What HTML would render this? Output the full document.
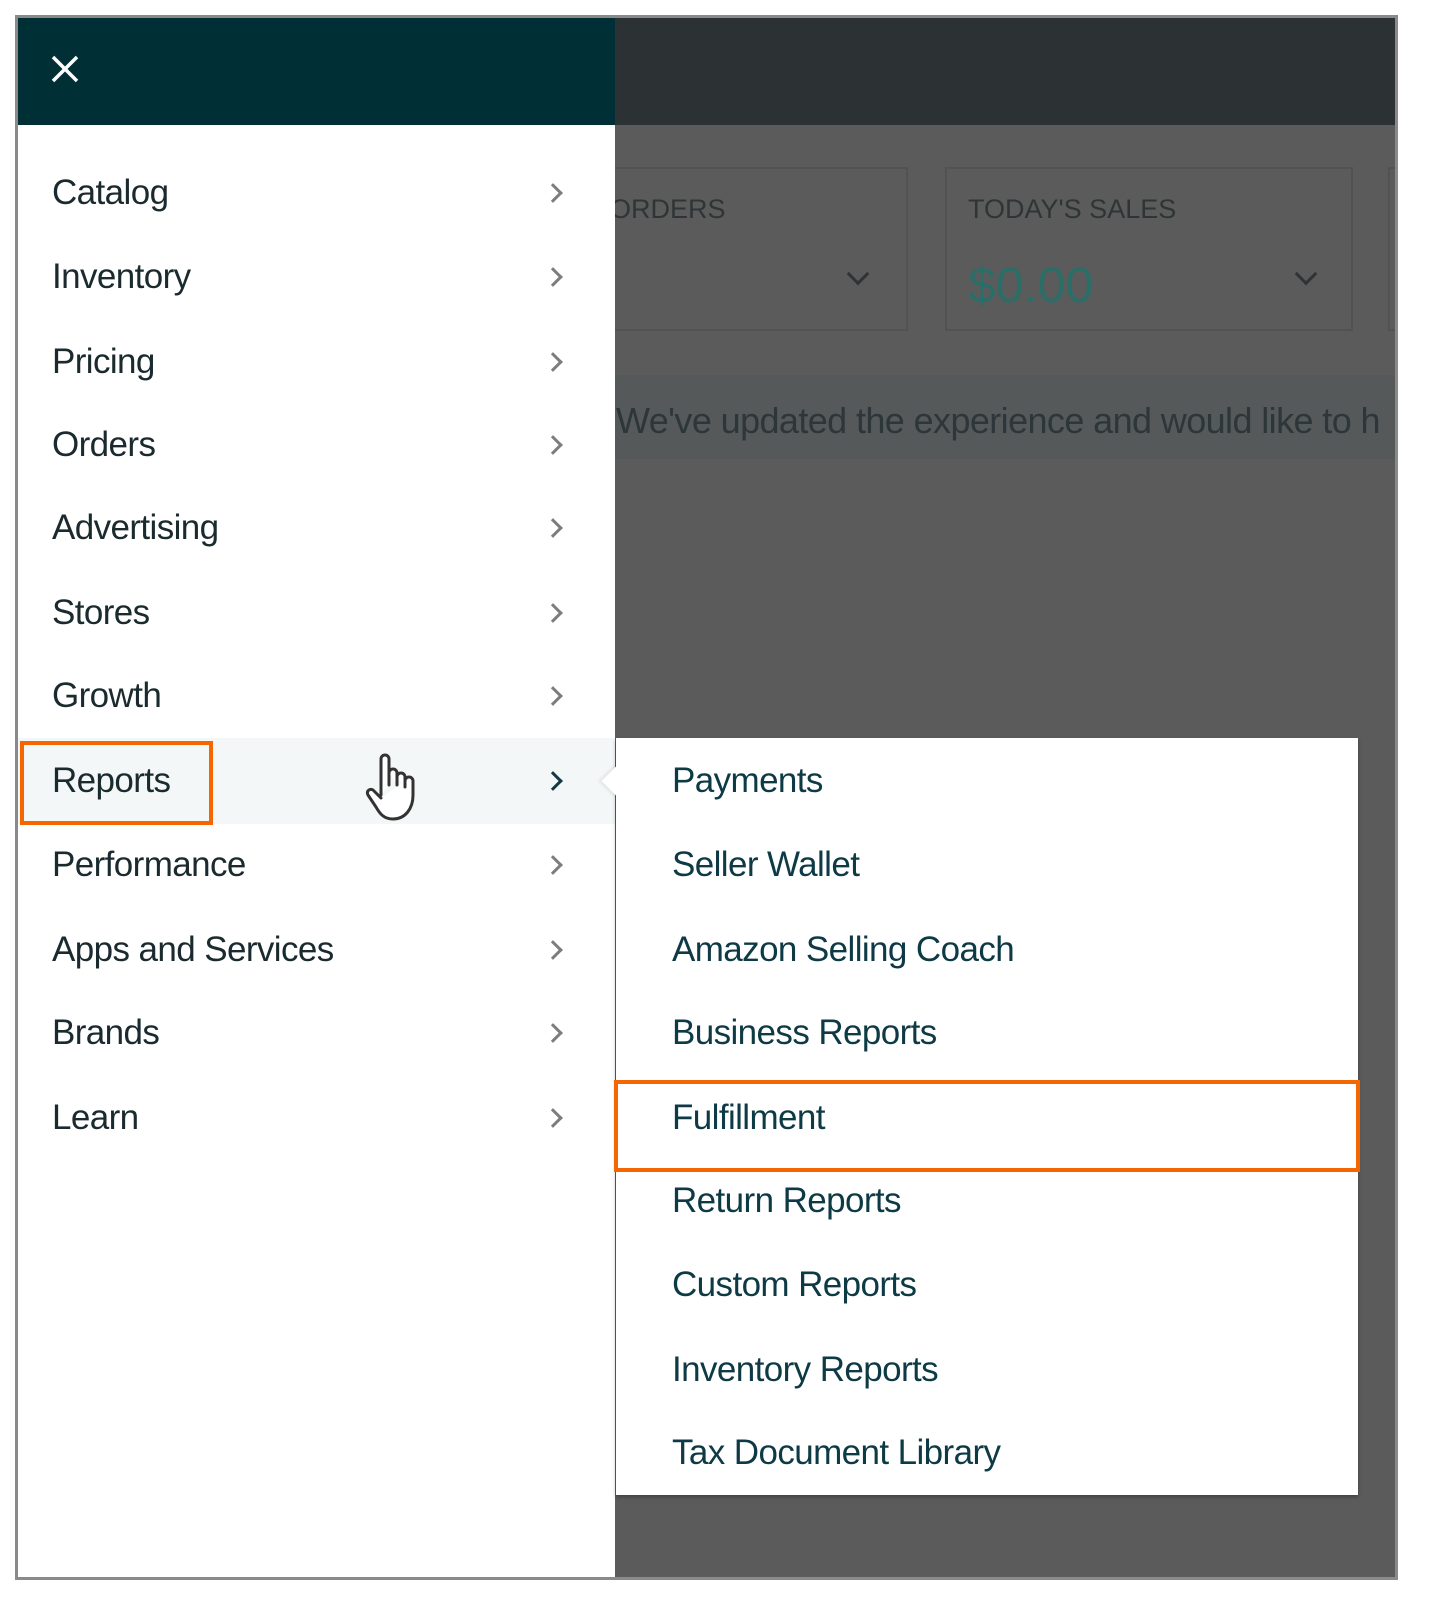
<!DOCTYPE html>
<html><head><meta charset="utf-8"><style>
*{margin:0;padding:0;box-sizing:border-box}
body{width:1440px;height:1599px;background:#fff;position:relative;overflow:hidden;font-family:"Liberation Sans",sans-serif}
.a{position:absolute}
.frame{left:15px;top:15px;width:1383px;height:1565px;border:3px solid #8a8a8a;background:#5b5b5b;overflow:hidden}
.mi{position:absolute;left:34px;font-size:35px;color:#1a2a2e;letter-spacing:-0.6px;line-height:40px}
.ch{position:absolute;left:528px;width:14px;height:14px;border-right:3px solid #7d7d7d;border-top:3px solid #7d7d7d;transform:rotate(45deg)}
.si{position:absolute;left:56px;font-size:35px;color:#0d3a44;letter-spacing:-0.6px;line-height:40px}
</style></head><body>
<div class="a frame">
 <div class="a" style="left:0;top:0;width:1380px;height:107px;background:#2c3234"></div>
 <div class="a" style="left:520px;top:149px;width:370px;height:164px;border:2px solid #525252"></div>
 <div class="a" style="left:592px;top:176px;font-size:27px;color:#2f3536">ORDERS</div>
 <div class="a" style="left:832px;top:248px;width:16px;height:16px;border-right:3px solid #2e3435;border-bottom:3px solid #2e3435;transform:rotate(45deg)"></div>
 <div class="a" style="left:927px;top:149px;width:408px;height:164px;border:2px solid #525252"></div>
 <div class="a" style="left:950px;top:176px;font-size:27px;color:#2f3536">TODAY'S SALES</div>
 <div class="a" style="left:950px;top:238px;font-size:50px;color:#2b6e68">$0.00</div>
 <div class="a" style="left:1280px;top:248px;width:16px;height:16px;border-right:3px solid #2e3435;border-bottom:3px solid #2e3435;transform:rotate(45deg)"></div>
 <div class="a" style="left:1370px;top:149px;width:30px;height:164px;border:2px solid #525252"></div>
 <div class="a" style="left:580px;top:357px;width:800px;height:84px;background:#55595a"></div>
 <div class="a" style="left:598px;top:382px;font-size:36px;color:#2d3639;white-space:nowrap;letter-spacing:-0.6px">We've updated the experience and would like to h</div>
 <div class="a" style="left:0;top:0;width:597px;height:1565px;background:#fff"></div>
 <div class="a" style="left:0;top:0;width:597px;height:107px;background:#002f36"></div>
 <svg class="a" style="left:32px;top:36px" width="30" height="30" viewBox="0 0 30 30"><path d="M3 3L27 27M27 3L3 27" stroke="#fff" stroke-width="3.5"/></svg>
 <div class="a" style="left:0;top:720px;width:597px;height:86px;background:#f3f7f8"></div>
 <div class="a" style="left:2px;top:723px;width:193px;height:84px;border:4px solid #f56600"></div>
 <div class="mi" style="top:155px">Catalog</div><div class="ch" style="top:168px"></div>
 <div class="mi" style="top:239px">Inventory</div><div class="ch" style="top:252px"></div>
 <div class="mi" style="top:324px">Pricing</div><div class="ch" style="top:337px"></div>
 <div class="mi" style="top:407px">Orders</div><div class="ch" style="top:420px"></div>
 <div class="mi" style="top:490px">Advertising</div><div class="ch" style="top:503px"></div>
 <div class="mi" style="top:575px">Stores</div><div class="ch" style="top:588px"></div>
 <div class="mi" style="top:658px">Growth</div><div class="ch" style="top:671px"></div>
 <div class="mi" style="top:743px">Reports</div><div class="ch" style="top:756px;border-color:#123a40"></div>
 <svg class="a" style="left:345px;top:735px" width="56" height="70" viewBox="0 0 56 70"><path d="M18 42V6a4 4 0 0 1 8 0v26M26 20a4 4 0 0 1 8 0v12M34 24a4 4 0 0 1 8 0v10M42 28a4 4 0 0 1 8 0v14c0 14-8 24-20 24c-9 0-13-5-17-12L5 42c-2-4 2-7 5-5l8 8" fill="#fff" stroke="#333" stroke-width="3" stroke-linejoin="round" stroke-linecap="round"/></svg>
 <div class="mi" style="top:827px">Performance</div><div class="ch" style="top:840px"></div>
 <div class="mi" style="top:912px">Apps and Services</div><div class="ch" style="top:925px"></div>
 <div class="mi" style="top:995px">Brands</div><div class="ch" style="top:1008px"></div>
 <div class="mi" style="top:1080px">Learn</div><div class="ch" style="top:1093px"></div>
 <div class="a" style="left:598px;top:720px;width:742px;height:757px;background:#fff;box-shadow:0 2px 4px rgba(0,0,0,.3)">
  <div class="a" style="left:-2px;top:342px;width:746px;height:92px;border:4px solid #f56600"></div>
  <div class="si" style="top:23px">Payments</div>
  <div class="si" style="top:107px">Seller Wallet</div>
  <div class="si" style="top:192px">Amazon Selling Coach</div>
  <div class="si" style="top:275px">Business Reports</div>
  <div class="si" style="top:360px">Fulfillment</div>
  <div class="si" style="top:443px">Return Reports</div>
  <div class="si" style="top:527px">Custom Reports</div>
  <div class="si" style="top:612px">Inventory Reports</div>
  <div class="si" style="top:695px">Tax Document Library</div>
 </div>
 <div class="a" style="left:588px;top:752px;width:22px;height:22px;background:#fff;transform:rotate(45deg);box-shadow:-2px 2px 3px rgba(0,0,0,.08)"></div>
</div>
</body></html>
